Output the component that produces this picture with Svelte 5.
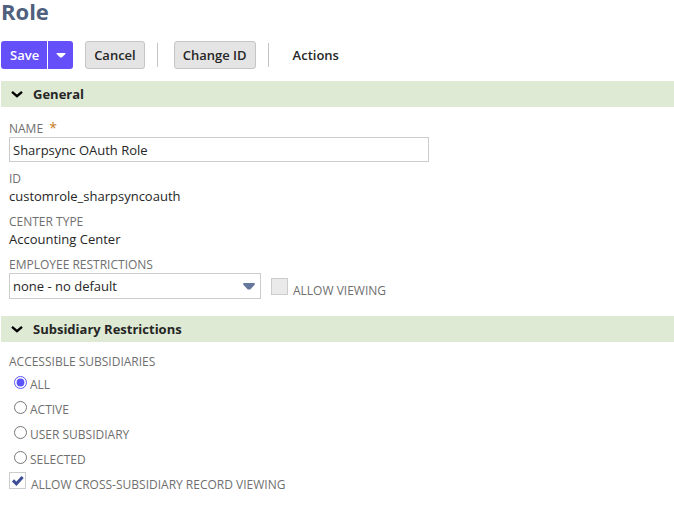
<script>
  let name = $state('Sharpsync OAuth Role');
  let employee = $state('none - no default');
  let access = $state('ALL');
  let crossView = $state(true);
  let open = $state({ general: true, subsidiary: true });
  const choices = ['ALL', 'ACTIVE', 'USER SUBSIDIARY', 'SELECTED'];
</script>

{#snippet heading(title, key)}
  <h2>
    <button type="button" aria-expanded={open[key]} onclick={() => (open[key] = !open[key])}>
      <svg width="12" height="8" viewBox="0 0 12 8" aria-hidden="true" class:closed={!open[key]}>
        <path d="M1 1.9 6 6.1 11 1.9" fill="none" stroke="#000" stroke-width="2.4" />
      </svg>
      {title}
    </button>
  </h2>
{/snippet}

<main>
  <h1>Role</h1>

  <div class="toolbar">
    <div class="split">
      <button type="button" class="primary">Save</button>
      <button type="button" class="primary more" aria-label="More save options">
        <svg width="10" height="5" viewBox="0 0 10 5" aria-hidden="true">
          <path d="M.6 0H9.4V.9L5.8 4.6H4.2L.6.9Z" fill="#fff" />
        </svg>
      </button>
    </div>
    <button type="button" class="plain">Cancel</button>
    <span class="rule"></span>
    <button type="button" class="plain">Change ID</button>
    <span class="rule"></span>
    <button type="button" class="menu">Actions</button>
  </div>

  <section>
    {@render heading('General', 'general')}
    {#if open.general}
      <div class="body fields">
        <div class="field">
          <label for="name">NAME <span class="required">*</span></label>
          <input id="name" type="text" bind:value={name} required />
        </div>
        <dl class="field">
          <dt>ID</dt>
          <dd>customrole_sharpsyncoauth</dd>
        </dl>
        <dl class="field">
          <dt>CENTER TYPE</dt>
          <dd>Accounting Center</dd>
        </dl>
        <div class="field">
          <label for="employee">EMPLOYEE RESTRICTIONS</label>
          <div class="row">
            <div class="select">
              <select id="employee" bind:value={employee}>
                <option>none - no default</option>
              </select>
              <svg width="12" height="7" viewBox="0 0 12 7" aria-hidden="true">
                <path d="M.3 0H11.7V1.8L7.2 6.6H4.8L.3 1.8Z" fill="#65779b" />
              </svg>
            </div>
            <label class="check">
              <input type="checkbox" disabled />
              <span>ALLOW VIEWING</span>
            </label>
          </div>
        </div>
      </div>
    {/if}
  </section>

  <section>
    {@render heading('Subsidiary Restrictions', 'subsidiary')}
    {#if open.subsidiary}
      <div class="body">
        <fieldset>
          <legend>ACCESSIBLE SUBSIDIARIES</legend>
          <div class="choices">
            {#each choices as choice}
              <label class="radio">
                <input type="radio" name="access" value={choice} bind:group={access} />
                <span>{choice}</span>
              </label>
            {/each}
          </div>
        </fieldset>
        <label class="check">
          <input type="checkbox" bind:checked={crossView} />
          <span>ALLOW CROSS-SUBSIDIARY RECORD VIEWING</span>
        </label>
      </div>
    {/if}
  </section>
</main>

<style>
  :global(body) {
    background: #fff;
  }
  main {
    padding-left: 1px;
    font: 12px/18px 'Open Sans', 'Noto Sans', sans-serif;
    color: #6f6f6f;
  }
  main * {
    box-sizing: border-box;
  }
  h1,
  h2,
  dl,
  dd {
    margin: 0;
  }
  h1 {
    font-size: 22px;
    line-height: 22px;
    font-weight: 700;
    color: #4f5f7d;
  }
  button,
  input,
  select {
    margin: 0;
    font-family: inherit;
    font-size: 13px;
    color: #262626;
  }
  button {
    border: 0;
    background: none;
    padding: 0;
    cursor: pointer;
  }
  .toolbar {
    display: flex;
    align-items: center;
    gap: 12px;
    margin: 19px 0 12px;
  }
  .toolbar button {
    height: 28px;
    font-weight: 600;
  }
  .split {
    display: flex;
    gap: 1px;
    border-radius: 3px;
    overflow: hidden;
  }
  .toolbar .primary {
    padding: 0 8px 0 9px;
    background: #644ff9;
    color: #fff;
  }
  .toolbar .more {
    display: flex;
    align-items: center;
    justify-content: center;
    width: 25px;
    padding: 0;
  }
  .toolbar .plain {
    padding: 0 8px;
    border: 1px solid #c5c5c5;
    border-radius: 3px;
    background: #e4e4e4;
  }
  .rule {
    width: 1px;
    height: 24px;
    margin-right: 4px;
    background: #c4c4c4;
  }
  .menu {
    padding: 0 8px;
  }
  h2 button {
    display: flex;
    align-items: center;
    gap: 10px;
    width: 100%;
    height: 26px;
    padding: 0 10px;
    background: #deead4;
    font-weight: 700;
    text-align: left;
  }
  .closed {
    transform: rotate(-90deg);
  }
  .body {
    padding: 12px 8px 17px;
  }
  .fields {
    display: flex;
    flex-direction: column;
    gap: 9px;
    padding-top: 14px;
  }
  .field > label,
  dt,
  legend {
    display: block;
    line-height: 16px;
  }
  .required {
    margin-left: 3px;
    font-size: 14px;
    line-height: 12px;
    color: #c67d1e;
  }
  dd {
    font-size: 13px;
    color: #262626;
  }
  input[type='text'] {
    display: block;
    width: 100%;
    max-width: 420px;
    height: 25px;
    padding: 0 3px;
    border: 1px solid #ccc;
    background: #fff;
  }
  .row {
    display: flex;
    gap: 10px;
  }
  .select {
    display: grid;
    align-items: center;
    width: 252px;
  }
  .select > * {
    grid-area: 1 / 1;
  }
  .select svg {
    justify-self: end;
    margin-right: 6px;
    pointer-events: none;
  }
  select {
    appearance: none;
    width: 100%;
    height: 26px;
    padding: 0 24px 0 3px;
    border: 1px solid #ccc;
    border-radius: 0;
    background: #fff;
  }
  .check {
    display: flex;
    align-items: flex-start;
    gap: 5px;
  }
  .row .check {
    padding-top: 5px;
  }
  .check span {
    padding-top: 5px;
    line-height: 16px;
  }
  input[type='checkbox'] {
    appearance: none;
    flex: none;
    width: 17px;
    height: 17px;
    border: 1px solid #ccc;
    background: #fff;
  }
  input[type='checkbox']:disabled {
    background: #eaeaea;
  }
  input[type='checkbox']:checked {
    background: #fff
      url("data:image/svg+xml,%3Csvg xmlns='http://www.w3.org/2000/svg' viewBox='0 0 15 15'%3E%3Cpath d='M3 7.4 6.4 10.8 12.6 4' fill='none' stroke='%233d4d96' stroke-width='3'/%3E%3C/svg%3E");
  }
  fieldset {
    min-width: 0;
    margin: 0;
    padding: 0;
    border: 0;
  }
  legend {
    padding: 0 0 5px;
  }
  .choices {
    display: flex;
    flex-direction: column;
    gap: 4px;
    padding-bottom: 1px;
  }
  .radio {
    display: flex;
    align-items: flex-start;
    gap: 3px;
    height: 21px;
    padding: 1px 0 0 5px;
  }
  .radio input {
    width: 13px;
    height: 13px;
    accent-color: #5b54fb;
  }
</style>
